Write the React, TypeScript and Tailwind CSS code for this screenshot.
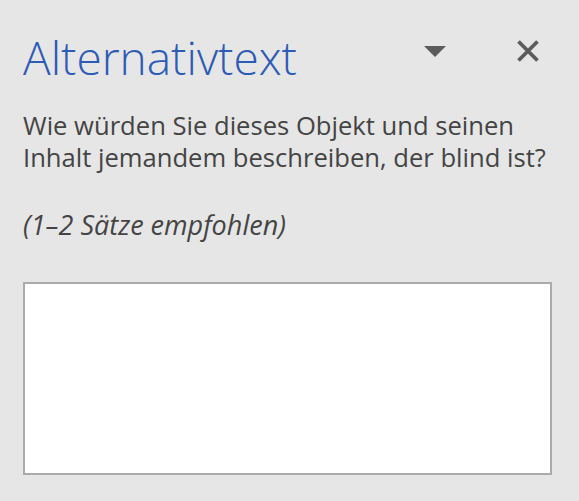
export default function App() {
  return (
    <div className="min-h-screen w-full bg-[#e6e6e6] font-['Segoe_UI','Open_Sans',sans-serif]">
      <div className="flex w-[579px] flex-col pl-[23px] pt-[22px]">
        <div className="flex items-start">
          <h1 className="mt-[5px] flex-1 text-[46px] font-light leading-[60px] text-[#2d5bb5]">Alternativtext</h1>
          <button className="mt-[9px] flex h-[40px] w-[40px] items-center justify-center">
            <svg width="22" height="11" viewBox="0 0 22 11">
              <path d="M0 0 H22 L11 11 Z" fill="#5c5c5c" />
            </svg>
          </button>
          <button className="ml-[53px] mr-[31px] mt-[9px] flex h-[40px] w-[40px] items-center justify-center">
            <svg width="24" height="24" viewBox="0 0 24 24">
              <path d="M2.5 2.5 L21.5 21.5 M21.5 2.5 L2.5 21.5" stroke="#5c5c5c" strokeWidth="3.8" />
            </svg>
          </button>
        </div>
        <p className="mt-[23px] w-[535px] text-[25.6px] leading-[32px] text-[#444444]">
          Wie würden Sie dieses Objekt und seinen Inhalt jemandem beschreiben, der blind ist?
        </p>
        <p className="mt-[35px] text-[27px] italic leading-[32px] text-[#444444]">(1–2 Sätze empfohlen)</p>
        <textarea className="mt-[41px] h-[193px] w-[529px] resize-none border-2 border-[#ababab] bg-white outline-none" />
      </div>
    </div>
  )
}
